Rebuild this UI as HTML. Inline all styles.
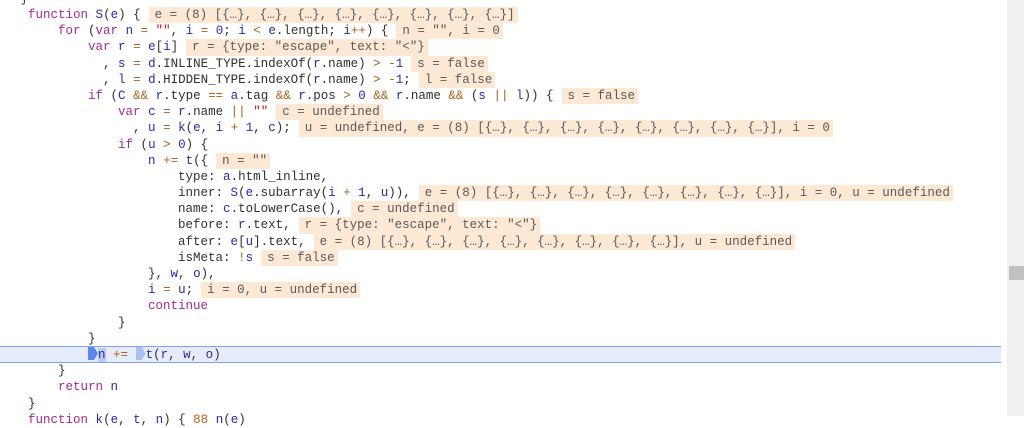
<!DOCTYPE html>
<html><head><meta charset="utf-8"><style>
html,body{margin:0;padding:0;width:1024px;height:416px;overflow:hidden;background:#fff}
#c{position:absolute;left:5.5px;top:-9.2px;font-family:"Liberation Mono",monospace;font-size:12.5px;color:#303030}
.l{height:16.2px;line-height:16.2px;white-space:pre;position:relative}
.k{color:#a02a91}.v{color:#2a2aa8}.o{color:#b0601a}.s{color:#c41a16}.n{color:#2a2ab8}
.h{background:#fde8d3;color:#5a5a5a;margin-left:8px;padding:0 3px 0 6px;display:inline-block;height:16.2px;line-height:16.2px}
.cur{position:absolute;left:-6px;width:1007px;top:346px;height:15px;background:#e6ecfc;border-top:1px solid #7fa3ef;border-bottom:1px solid #7fa3ef}
#sb{position:absolute;left:1007px;top:0;width:17px;height:416px;background:#f1f1f1}
#th{position:absolute;left:1009px;top:266px;width:15px;height:14px;background:#c1c1c1}
.m{display:inline-block;width:10px;height:13px;vertical-align:-2px;background:#5b85ee;clip-path:polygon(0 0,60% 0,100% 50%,60% 100%,0 100%)}
.m2{background:#a9bff5}
</style></head><body>
<div class="cur"></div>
<div id="c">
<div class="l">  }</div>
<div class="l">   <span class="k">function</span> <span class="v">S</span>(<span class="v">e</span>) {<span class="h">e = (8) [{…}, {…}, {…}, {…}, {…}, {…}, {…}, {…}]</span></div>
<div class="l">       <span class="k">for</span> (<span class="k">var</span> <span class="v">n</span> <span class="o">=</span> <span class="s">""</span>, <span class="v">i</span> <span class="o">=</span> <span class="n">0</span>; <span class="v">i</span> <span class="o">&lt;</span> <span class="v">e</span>.length; <span class="v">i</span><span class="o">++</span>) {<span class="h">n = "", i = 0</span></div>
<div class="l">           <span class="k">var</span> <span class="v">r</span> <span class="o">=</span> <span class="v">e</span>[<span class="v">i</span>]<span class="h">r = {type: "escape", text: "&lt;"}</span></div>
<div class="l">             , <span class="v">s</span> <span class="o">=</span> <span class="v">d</span>.INLINE_TYPE.indexOf(<span class="v">r</span>.name) <span class="o">&gt;</span> <span class="o">-</span><span class="n">1</span><span class="h">s = false</span></div>
<div class="l">             , <span class="v">l</span> <span class="o">=</span> <span class="v">d</span>.HIDDEN_TYPE.indexOf(<span class="v">r</span>.name) <span class="o">&gt;</span> <span class="o">-</span><span class="n">1</span>;<span class="h">l = false</span></div>
<div class="l">           <span class="k">if</span> (<span class="v">C</span> <span class="o">&amp;&amp;</span> <span class="v">r</span>.type <span class="o">==</span> <span class="v">a</span>.tag <span class="o">&amp;&amp;</span> <span class="v">r</span>.pos <span class="o">&gt;</span> <span class="n">0</span> <span class="o">&amp;&amp;</span> <span class="v">r</span>.name <span class="o">&amp;&amp;</span> (<span class="v">s</span> <span class="o">||</span> <span class="v">l</span>)) {<span class="h">s = false</span></div>
<div class="l">               <span class="k">var</span> <span class="v">c</span> <span class="o">=</span> <span class="v">r</span>.name <span class="o">||</span> <span class="s">""</span><span class="h">c = undefined</span></div>
<div class="l">                 , <span class="v">u</span> <span class="o">=</span> <span class="v">k</span>(<span class="v">e</span>, <span class="v">i</span> <span class="o">+</span> <span class="n">1</span>, <span class="v">c</span>);<span class="h">u = undefined, e = (8) [{…}, {…}, {…}, {…}, {…}, {…}, {…}, {…}], i = 0</span></div>
<div class="l">               <span class="k">if</span> (<span class="v">u</span> <span class="o">&gt;</span> <span class="n">0</span>) {</div>
<div class="l">                   <span class="v">n</span> <span class="o">+=</span> <span class="v">t</span>({<span class="h">n = ""</span></div>
<div class="l">                       type: <span class="v">a</span>.html_inline,</div>
<div class="l">                       inner: <span class="v">S</span>(<span class="v">e</span>.subarray(<span class="v">i</span> <span class="o">+</span> <span class="n">1</span>, <span class="v">u</span>)),<span class="h">e = (8) [{…}, {…}, {…}, {…}, {…}, {…}, {…}, {…}], i = 0, u = undefined</span></div>
<div class="l">                       name: <span class="v">c</span>.toLowerCase(),<span class="h">c = undefined</span></div>
<div class="l">                       before: <span class="v">r</span>.text,<span class="h">r = {type: "escape", text: "&lt;"}</span></div>
<div class="l">                       after: <span class="v">e</span>[<span class="v">u</span>].text,<span class="h">e = (8) [{…}, {…}, {…}, {…}, {…}, {…}, {…}, {…}], u = undefined</span></div>
<div class="l">                       isMeta: <span class="o">!</span><span class="v">s</span><span class="h">s = false</span></div>
<div class="l">                   }, <span class="v">w</span>, <span class="v">o</span>),</div>
<div class="l">                   <span class="v">i</span> <span class="o">=</span> <span class="v">u</span>;<span class="h">i = 0, u = undefined</span></div>
<div class="l">                   <span class="k">continue</span></div>
<div class="l">               }</div>
<div class="l">           }</div>
<div class="l">           <span class="m"></span><span class="v" style="background:#b7c9f7">n</span> <span class="o">+=</span> <span class="m m2"></span><span class="v">t</span>(<span class="v">r</span>, <span class="v">w</span>, <span class="v">o</span>)</div>
<div class="l">       }</div>
<div class="l">       <span class="k">return</span> <span class="v">n</span></div>
<div class="l">   }</div>
<div class="l">   <span class="k">function</span> <span class="v">k</span>(<span class="v">e</span>, <span class="v">t</span>, <span class="v">n</span>) { <span class="o">88</span> <span class="v">n</span>(<span class="v">e</span>)</div>
</div>
<div id="sb"></div><div id="th"></div>
</body></html>
